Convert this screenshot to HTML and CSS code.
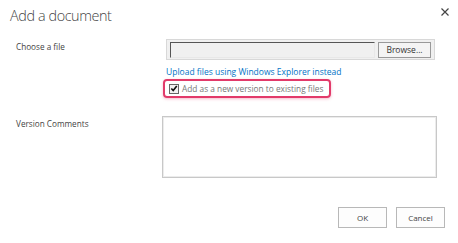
FILE: index.html
```html
<!DOCTYPE html>
<html lang="en">
<head>
    <meta charset="UTF-8">
    <title>Add a document</title>
    <link rel="stylesheet" href="styles.css">
</head>
<body>
    <div class="dialog">
        <div class="dialog-header">
            <h1 class="dialog-title">Add a document</h1>
            <span class="dialog-close">
                <svg width="8" height="8" viewBox="0 0 8 8"><path d="M0.5 0.5L7.5 7.5M7.5 0.5L0.5 7.5" stroke="#444" stroke-width="1.2"/></svg>
            </span>
        </div>

        <div class="form-row row-file">
            <div class="form-label">Choose a file</div>
            <div class="form-field">
                <div class="file-input">
                    <div class="file-path"></div>
                    <div class="browse-btn">Browse...</div>
                </div>
                <a class="upload-link" href="#">Upload files using Windows Explorer instead</a>
                <div class="highlight">
                    <span class="check-box">
                        <svg width="9" height="9" viewBox="0 0 9 9"><path d="M1.5 4.5L3.6 6.8L7.6 1.6" fill="none" stroke="#111" stroke-width="1.8"/></svg>
                    </span>
                    <span class="check-label">Add as a new version to existing files</span>
                </div>
            </div>
        </div>

        <div class="form-row row-comments">
            <div class="form-label">Version Comments</div>
            <div class="form-field">
                <div class="comments-box"></div>
            </div>
        </div>

        <div class="dialog-buttons">
            <button class="btn">OK</button>
            <button class="btn">Cancel</button>
        </div>
    </div>
</body>
</html>
```

FILE: styles.css
```css
* {
    margin: 0;
    padding: 0;
    box-sizing: border-box;
}

body {
    font-family: "Open Sans", "Noto Sans", sans-serif;
    background-color: #fff;
    color: #444;
    width: 458px;
    height: 243px;
    overflow: hidden;
}

.dialog {
    padding: 5px 9px 0 10px;
}

.dialog-header {
    display: flex;
    justify-content: space-between;
    align-items: flex-start;
    height: 34px;
}

.dialog-title {
    font-size: 14.4px;
    font-weight: 300;
    line-height: 22px;
    letter-spacing: -0.4px;
    color: #444;
}

.dialog-close {
    display: flex;
    margin-top: 3px;
    margin-right: 0;
}

.form-row {
    display: flex;
}

.form-label {
    width: 154px;
    padding-left: 6px;
    font-size: 8.2px;
    color: #444;
}

.row-file .form-label {
    padding-top: 2px;
}

.form-field {
    display: flex;
    flex-direction: column;
    align-items: flex-start;
}

.file-input {
    display: flex;
    align-items: center;
    gap: 3px;
    width: 269px;
    height: 21px;
    margin-left: 2px;
    padding: 0 3px;
    border: 1px solid #d8d8d8;
    background-color: #f0f0f0;
}

.file-path {
    width: 205px;
    height: 16px;
    border-top: 1px solid #555;
    border-left: 1px solid #555;
    border-bottom: 1px solid #e8e8e8;
    border-right: 1px solid #e8e8e8;
    background-color: #f0f0f0;
}

.browse-btn {
    width: 53px;
    height: 16px;
    border: 1px solid #999;
    background-color: #f4f4f4;
    font-size: 8.5px;
    line-height: 14px;
    text-align: center;
    color: #333;
}

.upload-link {
    margin-top: 6px;
    margin-left: 2px;
    font-size: 8.5px;
    line-height: 12px;
    color: #0072c6;
    text-decoration: none;
}

.highlight {
    display: flex;
    align-items: center;
    gap: 3px;
    width: 168px;
    height: 19px;
    margin-top: 1px;
    margin-left: -1px;
    padding-left: 4px;
    border: 2px solid #e23a6a;
    border-radius: 4px;
    box-shadow: 0 1px 3px rgba(226, 58, 106, 0.35);
}

.check-box {
    display: flex;
    align-items: center;
    justify-content: center;
    width: 10px;
    height: 10px;
    border: 1px solid #666;
    background-color: #f2f2f2;
}

.check-label {
    font-size: 8.3px;
    color: #777;
}

.row-comments {
    margin-top: 18px;
}

.row-comments .form-label {
    padding-top: 2px;
}

.comments-box {
    width: 275px;
    height: 62px;
    margin-left: -2px;
    border: 1px solid #c8c8c8;
    box-shadow: inset 0 0 0 1px #ececec;
}

.dialog-buttons {
    display: flex;
    justify-content: flex-end;
    gap: 9px;
    margin-top: 29px;
    padding-right: 4px;
}

.btn {
    width: 49px;
    height: 21px;
    border: 1px solid #b8b8b8;
    background-color: #fdfdfd;
    font-family: "Open Sans", "Noto Sans", sans-serif;
    font-size: 8px;
    color: #444;
}
```
